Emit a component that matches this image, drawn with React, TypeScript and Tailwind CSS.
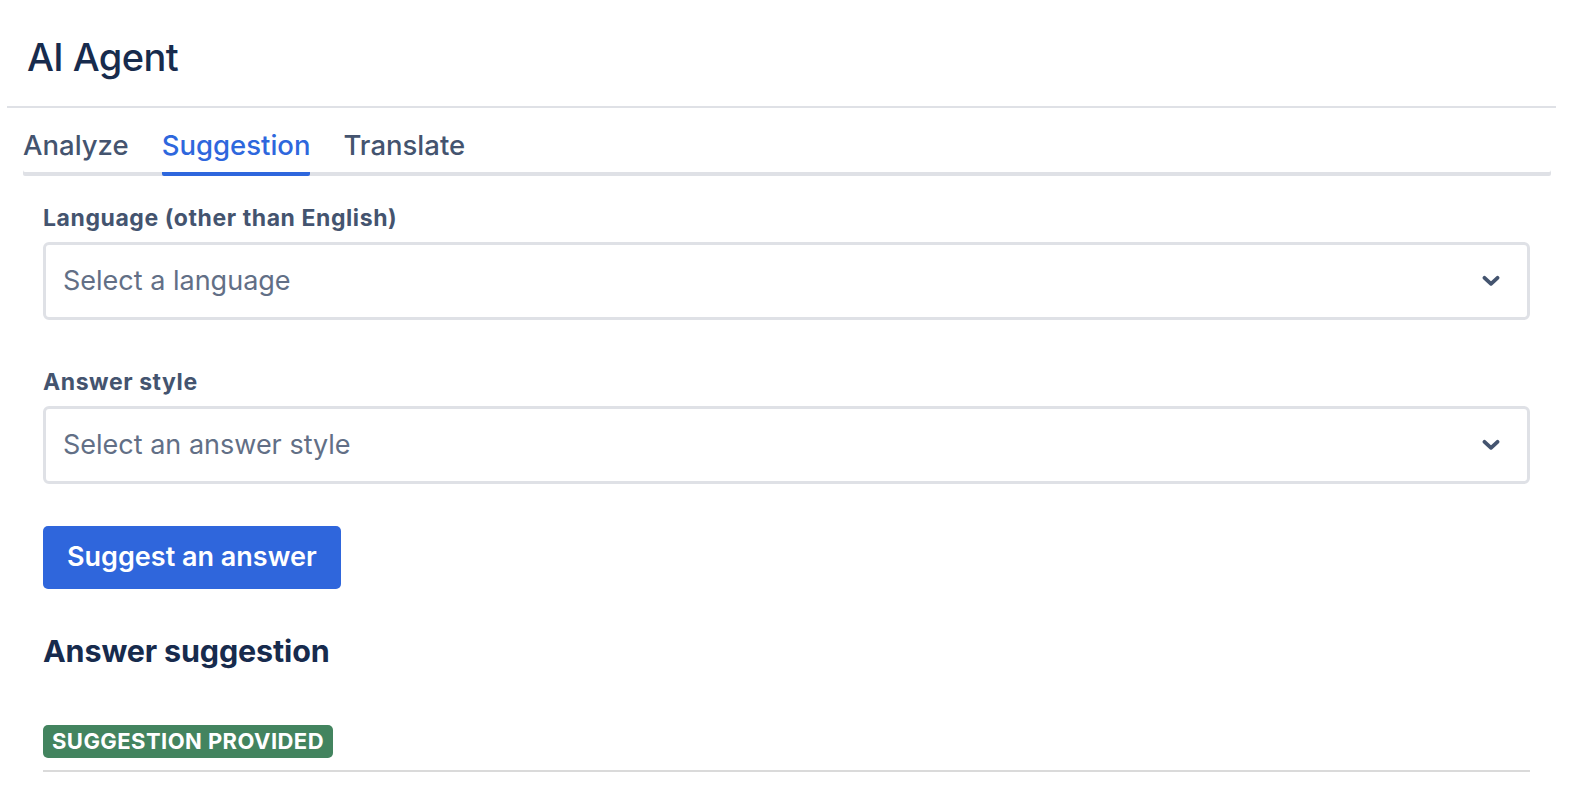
import { useState } from "react";

const tabs = ["Analyze", "Suggestion", "Translate"];

function Chevron() {
  return (
    <svg width="18" height="12" viewBox="0 0 18 12" fill="none">
      <path
        d="M2.5 2.8 L9 8.8 L15.5 2.8"
        stroke="#44546f"
        strokeWidth="3.8"
        strokeLinecap="round"
        strokeLinejoin="round"
      />
    </svg>
  );
}

function SelectBox({ placeholder }: { placeholder: string }) {
  return (
    <button className="w-full h-[78px] flex items-center justify-between pl-[17px] pr-[27px] border-[3px] border-[#dfe1e6] rounded-[6px] bg-white text-left cursor-pointer">
      <span className="text-[27px] leading-[36px] text-[#626f86]">{placeholder}</span>
      <Chevron />
    </button>
  );
}

function App() {
  const [active, setActive] = useState("Suggestion");

  return (
    <div className="min-h-screen bg-white pl-[7px] pr-[22px] font-['Inter',sans-serif]">
      <div className="h-[108px] flex items-center pl-5 pt-[8px] border-b-2 border-[#dfe1e6]">
        <h1 className="text-[38px] leading-[48px] font-medium text-[#172b4d] tracking-[-0.015em]">
          AI Agent
        </h1>
      </div>

      <div className="ml-4 mr-[5px] h-[68px] flex gap-[33px] shadow-[inset_0_-4px_0_#dfe1e6] rounded-b-[2px]">
        {tabs.map((t) => (
          <button
            key={t}
            onClick={() => setActive(t)}
            className={
              t === active
                ? "h-full pt-[9px] text-[27.5px] leading-[36px] font-medium text-[#2e67dd] border-b-4 border-[#2e67dd] rounded-b-[2px] cursor-pointer"
                : "h-full pt-[9px] text-[27.5px] leading-[36px] font-medium text-[#44546f] border-b-4 border-transparent cursor-pointer"
            }
          >
            {t}
          </button>
        ))}
      </div>

      <div className="pl-[36px] pr-[26px] pt-[28px]">
        <div className="text-[23px] leading-[28px] font-bold tracking-[0.025em] text-[#44546f] mb-[10px]">
          Language (other than English)
        </div>
        <SelectBox placeholder="Select a language" />

        <div className="mt-[48px] text-[23px] leading-[28px] font-bold tracking-[0.025em] text-[#44546f] mb-[10px]">
          Answer style
        </div>
        <SelectBox placeholder="Select an answer style" />

        <button className="mt-[42px] h-[63px] px-[24px] rounded-[5px] bg-[#2f66dc] text-white text-[27px] font-semibold cursor-pointer">
          Suggest an answer
        </button>

        <h2 className="mt-[42px] text-[30.5px] leading-[40px] font-bold tracking-[-0.005em] text-[#172b4d]">
          Answer suggestion
        </h2>

        <div className="mt-[54px] flex">
          <span className="h-[33px] flex items-center px-[9px] rounded-[5px] bg-[#43845f] text-white text-[22px] font-bold uppercase tracking-[0.02em]">
            Suggestion provided
          </span>
        </div>

        <div className="mt-[12px] h-[2px] bg-[#dadada]" />
      </div>
    </div>
  );
}

export default App;
